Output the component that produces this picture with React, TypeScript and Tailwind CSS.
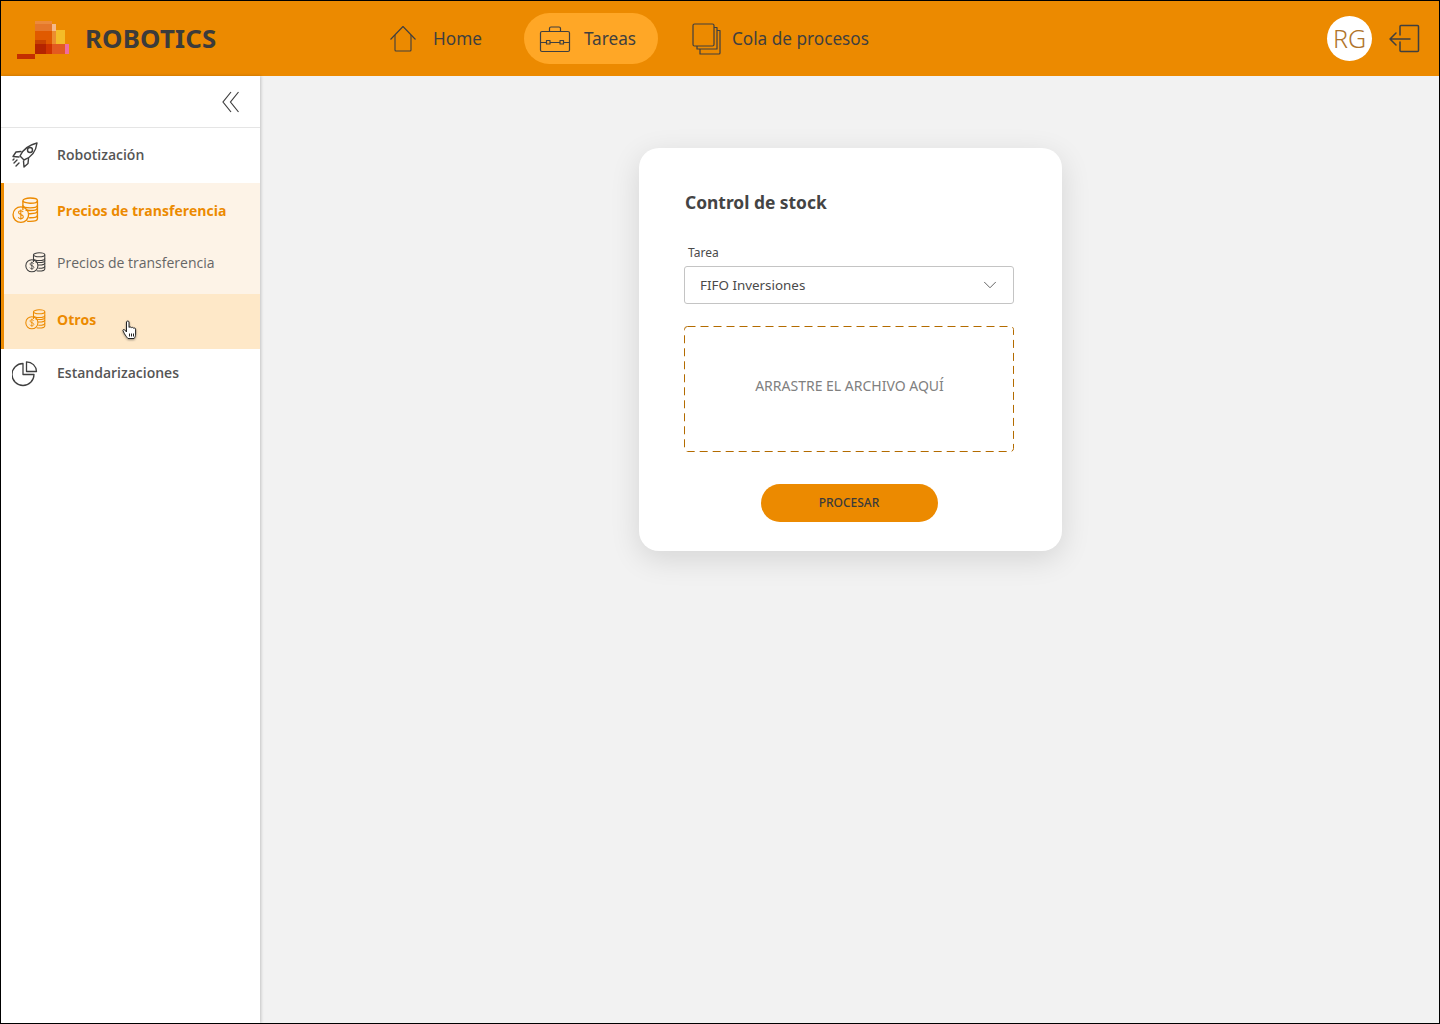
import React from 'react';
import { ChevronDown } from 'lucide-react';

const HomeIcon = () => (
  <svg width="28" height="28" viewBox="0 0 28 28" fill="none" stroke="#3f3f3f" strokeWidth="1.1" strokeLinejoin="round">
    <path d="M1.500 14.500 14 1.500l12.500 13" />
    <path d="M6 10v15a1 1 0 0 0 1 1h14a1 1 0 0 0 1-1V10" />
  </svg>
);

const BriefcaseIcon = () => (
  <svg width="32" height="28" viewBox="0 0 32 28" fill="none" stroke="#3f3f3f" strokeWidth="1.200" strokeLinejoin="round">
    <rect x="1.500" y="6.500" width="29" height="20" rx="1.500" />
    <path d="M10.500 6.500v-3a1.500 1.500 0 0 1 1.500-1.500h8a1.500 1.500 0 0 1 1.500 1.500v3" />
    <path d="M1.500 17.500h6M11 17.500h10M24.500 17.500h6" />
    <rect x="7.500" y="15.500" width="3.500" height="3.500" />
    <rect x="21" y="15.500" width="3.500" height="3.500" />
  </svg>
);

const StackIcon = () => (
  <svg width="30" height="32" viewBox="0 0 30 32" fill="none" stroke="#3f3f3f" strokeWidth="1.200" strokeLinejoin="round">
    <rect x="1" y="1" width="21" height="22" rx="1.500" />
    <path d="M22 4.500h3v21.500h-20v-3" />
    <path d="M25 7.500h3v22.500a1 1 0 0 1-1 1h-19v-5" />
  </svg>
);

const LogoutIcon = () => (
  <svg width="32" height="32" viewBox="0 0 32 32" fill="none" stroke="#3f3f3f" strokeWidth="1.500" strokeLinejoin="round" strokeLinecap="round">
    <path d="M12 12V3.500a1 1 0 0 1 1-1h16.500a1 1 0 0 1 1 1v24a1 1 0 0 1-1 1H13a1 1 0 0 1-1-1V19" />
    <path d="M2 16h20M8 10l-6 6 6 6" />
  </svg>
);

const RocketIcon = () => (
  <svg width="26" height="26" viewBox="0 0 26 26" fill="none" stroke="#3f3f3f" strokeWidth="1.400" strokeLinejoin="round" strokeLinecap="round" className="shrink-0">
    <path d="M8 14C11 7 17 3 25 1c-1 8-5 14-13 17z" />
    <circle cx="18" cy="8" r="2.500" />
    <path d="M9 9.500 4 10l-3 4.500 6 .5" />
    <path d="m16.500 16.500-.5 5-4 3.500-.5-6" />
    <path d="m2 21 3-3M4 24l3-3M1 18l1-1" />
  </svg>
);

const CoinsIcon = ({ color, size }: { color: string; size: number }) => (
  <svg width={size} height={size} viewBox="0 0 26 26" fill="none" stroke={color} strokeWidth="1.300" className="shrink-0">
    <ellipse cx="17.500" cy="3.500" rx="7" ry="2.500" />
    <path d="M10.500 3.500v9M24.500 3.500v17.500c0 1.500-3 2.500-7 2.500-1 0-2-.1-3-.3" />
    <path d="M10.500 8c0 1.500 3 2.500 7 2.500s7-1 7-2.500" />
    <path d="M13 12.500c1.300.4 2.800.5 4.500.5 4 0 7-1 7-2.500" />
    <path d="M16 16c.5.100 1 .1 1.500.1 4 0 7-1 7-2.500" />
    <path d="M16.500 20c.3 0 .7 0 1 0 4 0 7-1 7-2.500" />
    <circle cx="8.500" cy="17" r="7.500" />
    <path d="M10.800 14.500c-.5-1-1.300-1.300-2.300-1.300-1.300 0-2.200.7-2.200 1.800 0 2.500 4.600 1.300 4.600 4 0 1.100-1 1.800-2.400 1.800-1.100 0-2-.5-2.500-1.400M8.500 12v10" strokeWidth="1" />
  </svg>
);

const PieIcon = () => (
  <svg width="26" height="26" viewBox="0 0 26 26" fill="none" stroke="#3f3f3f" strokeWidth="1.300" strokeLinejoin="round" className="shrink-0 mt-[3px]">
    <path d="M11 2.500A11 11 0 1 0 22 13.500H11z" />
    <path d="M14.500 .8A10 10 0 0 1 24.500 10.500h-10z" />
  </svg>
);

const CollapseIcon = () => (
  <svg width="18" height="22" viewBox="0 0 18 22" fill="none" stroke="#3f3f3f" strokeWidth="1.200">
    <path d="M9 1 1 11l8 10M16.500 1l-8 10 8 10" />
  </svg>
);

const HandCursor = () => (
  <svg width="16" height="20" viewBox="0 0 16 20" fill="#ffffff" stroke="#222222" strokeWidth="1" strokeLinejoin="round" className="absolute left-[118px] top-[26px] drop-shadow-[0_1px_1px_rgba(0,0,0,0.4)]">
    <path d="M4.500 2c0-1.300 2.500-1.300 2.500 0v5.500c.3-.8 2.200-.8 2.400.3.400-.7 2-.6 2.200.5.500-.5 2-.3 2 .8v5c0 2-.7 3.200-1.500 4.400H6c-1-1-2.500-3-3.500-4.700L1 10.800c-.5-1 .8-1.800 1.600-1L4.500 12z" />
    <path d="M7.500 13.500v3M9.500 13.500v3M11.500 13.500v3" />
  </svg>
);

const Logo = () => (
  <svg width="52" height="38" viewBox="0 0 52 38" className="mt-[3px] shrink-0">
    <rect x="0" y="33" width="18" height="5" fill="#c42e00" />
    <rect x="18" y="0" width="17" height="3" fill="#ec8a3c" />
    <rect x="18" y="3" width="17" height="7" fill="#e5772a" />
    <rect x="18" y="10" width="17" height="13" fill="#e05a00" />
    <rect x="35" y="3" width="4" height="7" fill="#f5b98a" />
    <rect x="35" y="10" width="4" height="13" fill="#ec8d2f" />
    <rect x="39" y="9" width="9" height="14" fill="#f4bc28" />
    <rect x="18" y="19" width="11" height="4" fill="#c84200" />
    <rect x="18" y="23" width="11" height="10" fill="#b52400" />
    <rect x="29" y="23" width="6" height="10" fill="#d03400" />
    <rect x="35" y="23" width="13" height="10" fill="#e35a20" />
    <rect x="48" y="23" width="4" height="10" fill="#ef6ca0" />
  </svg>
);

const App = () => {
  return (
    <div className="w-[1440px] h-[1024px] border border-black bg-[#f2f2f2] flex flex-col overflow-hidden font-['Open_Sans',sans-serif]">
      {/* Header */}
      <header className="h-[75px] shrink-0 bg-[#ec8a00] flex items-center text-[#3f3f3f] font-['Noto_Sans',sans-serif]">
        <div className="w-[368px] shrink-0 flex items-center pl-[16px]">
          <Logo />
          <span className="ml-[16px] text-[25.800px] font-bold text-[#3b3b3b] tracking-[0.2px]">ROBOTICS</span>
        </div>
        <nav className="flex items-center text-[17.200px]">
          <div className="flex items-center pl-[20px] pr-[42px]">
            <HomeIcon />
            <span className="ml-[16px]">Home</span>
          </div>
          <div className="h-[51px] w-[134px] rounded-full bg-[#ffa726] flex items-center pl-[15px]">
            <BriefcaseIcon />
            <span className="ml-[13px]">Tareas</span>
          </div>
          <div className="flex items-center ml-[34px]">
            <StackIcon />
            <span className="ml-[10px]">Cola de procesos</span>
          </div>
        </nav>
        <div className="ml-auto flex items-center pr-[19px] gap-[16px]">
          <div className="w-[45px] h-[45px] rounded-full bg-white flex items-center justify-center text-[25px] font-light text-[#b0742a]">RG</div>
          <LogoutIcon />
        </div>
      </header>

      <div className="flex-1 flex min-h-0">
        {/* Sidebar */}
        <aside className="w-[259px] shrink-0 bg-white shadow-[1px_0_3px_rgba(0,0,0,0.2)] text-[14px] text-[#555555] flex flex-col">
          <div className="h-[52px] shrink-0 border-b border-[#e5e5e5] flex items-center justify-end pr-[20px]">
            <CollapseIcon />
          </div>
          <div className="h-[55px] shrink-0 flex items-center pl-[11px] pb-[2px] font-semibold">
            <RocketIcon />
            <span className="ml-[19px]">Robotización</span>
          </div>
          <div className="border-l-[3px] border-[#ec8a00]">
            <div className="h-[55px] bg-[#fdf3e7] flex items-center pl-[8px] text-[#ec8a00] font-bold">
              <CoinsIcon color="#ec8a00" size={27} />
              <span className="ml-[18px]">Precios de transferencia</span>
            </div>
            <div className="h-[56px] bg-[#fdf3e7] flex items-center pl-[21px] pb-[8px] text-[#666666]">
              <CoinsIcon color="#3f3f3f" size={21} />
              <span className="ml-[11px]">Precios de transferencia</span>
            </div>
            <div className="relative h-[55px] bg-[#fee8c8] flex items-center pl-[21px] pb-[4px] text-[#ec8a00] font-bold">
              <CoinsIcon color="#ec8a00" size={21} />
              <span className="ml-[11px]">Otros</span>
              <HandCursor />
            </div>
          </div>
          <div className="h-[48px] shrink-0 flex items-center pl-[11px] pb-[2px] font-semibold">
            <PieIcon />
            <span className="ml-[19px]">Estandarizaciones</span>
          </div>
        </aside>

        {/* Main */}
        <main className="flex-1 flex justify-center items-start pl-[2px] pt-[72px] font-['Noto_Sans',sans-serif]">
          <section className="w-[423px] h-[403px] bg-white rounded-[20px] shadow-[0_8px_30px_rgba(0,0,0,0.12)] pt-[41px] pl-[45px] pr-[48px]">
            <h1 className="ml-[1px] text-[17.400px] leading-[26px] font-bold text-[#444444]">Control de stock</h1>
            <label className="block mt-[30px] ml-[4px] text-[12px] leading-[16px] text-[#4a4a4a]">Tarea</label>
            <div className="mt-[5px] h-[38px] border border-[#c4c4c4] rounded-[3px] flex items-center justify-between pl-[15px] pr-[12px] text-[13.400px] text-[#4a4a4a]">
              <span>FIFO Inversiones</span>
              <ChevronDown size={22} strokeWidth={1} className="text-[#555555]" />
            </div>
            <div className="relative mt-[22px] h-[126px] flex items-center justify-center pb-[7px] pl-[1px] text-[14px] text-[#808080]">
              <svg className="absolute inset-0" width="330" height="126" fill="none">
                <rect x=".5" y=".5" width="329" height="125" rx="3" stroke="#b36b00" strokeDasharray="8 5" />
              </svg>
              ARRASTRE EL ARCHIVO AQUÍ
            </div>
            <div className="mt-[32px] flex justify-center">
              <button className="w-[177px] h-[38px] rounded-full bg-[#ec8a00] text-[12px] font-medium text-[#3b3b3b]">PROCESAR</button>
            </div>
          </section>
        </main>
      </div>
    </div>
  );
};

export default App;
